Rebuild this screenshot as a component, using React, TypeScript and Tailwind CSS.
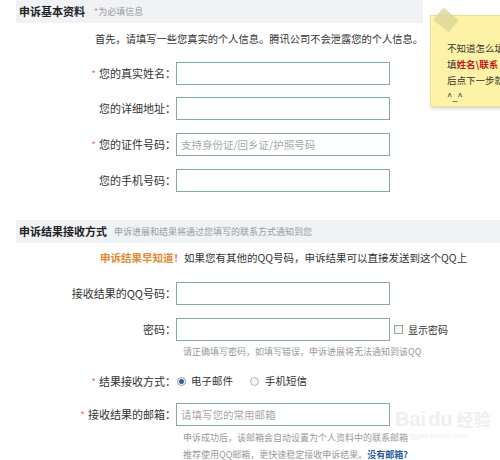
import React from "react";

function Label({ text, req }: { text: string; req?: boolean }) {
  return (
    <div className="w-[176px] shrink-0 text-right text-[11px] leading-[23px] text-[#333]">
      {req && <span className="text-[#e07a7a] text-[10px] mr-[3px]">*</span>}
      {text}
    </div>
  );
}

function Box({ placeholder }: { placeholder?: string }) {
  return (
    <div className="w-[214px] h-[23px] border border-[#86a8a8] bg-white shrink-0 flex items-center pl-[4px] text-[10.5px] text-[#a8a8a8]">
      {placeholder}
    </div>
  );
}

export default function App() {
  return (
    <div className="relative w-[500px] h-[460px] overflow-hidden bg-white font-['Noto_Sans_CJK_SC','Noto_Sans',sans-serif] text-[#333]">
      {/* Section 1 header */}
      <div className="ml-[16px] w-[407px] h-[23px] bg-[#f0f3f6] flex items-center pl-[3px]">
        <span className="text-[11px] font-bold text-[#222]">申诉基本资料</span>
        <span className="ml-[9px] text-[9px] text-[#999]">
          <span className="text-[#e07a7a]">*</span>为必填信息
        </span>
      </div>

      <div className="mt-[8px] h-[16px] leading-[16px] pl-[95px] text-[10.25px] text-[#333] whitespace-nowrap">
        首先，请填写一些您真实的个人信息。腾讯公司不会泄露您的个人信息。
      </div>

      <div className="mt-[15px] flex">
        <Label text="您的真实姓名：" req />
        <Box />
      </div>
      <div className="mt-[12px] flex">
        <Label text="您的详细地址：" />
        <Box />
      </div>
      <div className="mt-[13px] flex">
        <Label text="您的证件号码：" req />
        <Box placeholder="支持身份证/回乡证/护照号码" />
      </div>
      <div className="mt-[13px] flex">
        <Label text="您的手机号码：" />
        <Box />
      </div>

      {/* Section 2 header */}
      <div className="mt-[28px] ml-[16px] h-[23px] bg-[#f0f3f6] flex items-center pl-[3px]">
        <span className="text-[11px] font-bold text-[#222]">申诉结果接收方式</span>
        <span className="ml-[7px] text-[9px] text-[#999]">申诉进展和结果将通过您填写的联系方式通知到您</span>
      </div>

      <div className="mt-[7px] h-[16px] leading-[16px] pl-[100px] text-[10.5px] whitespace-nowrap">
        <span className="font-bold text-[#e08a35]">申诉结果早知道！</span>
        <span className="text-[#333]">如果您有其他的QQ号码，申诉结果可以直接发送到这个QQ上</span>
      </div>

      <div className="mt-[16px] flex">
        <Label text="接收结果的QQ号码：" />
        <Box />
      </div>
      <div className="mt-[13px] flex items-center">
        <Label text="密码：" />
        <Box />
        <div className="ml-[4px] w-[9px] h-[9px] border border-[#a0a0a0] bg-gradient-to-br from-[#e8e8e8] to-[#ffffff]" />
        <span className="ml-[5px] text-[10px] text-[#333]">显示密码</span>
      </div>
      <div className="mt-[4px] h-[14px] leading-[14px] pl-[183px] text-[9px] text-[#999] whitespace-nowrap">
        请正确填写密码，如填写错误，申诉进展将无法通知到该QQ
      </div>

      <div className="mt-[14px] h-[16px] flex items-center">
        <div className="w-[176px] shrink-0 text-right text-[11px] text-[#333]">
          <span className="text-[#e07a7a] text-[10px] mr-[3px]">*</span>结果接收方式：
        </div>
        <div className="ml-[1px] w-[9px] h-[9px] rounded-full border border-[#8a9aa8] bg-white flex items-center justify-center">
          <div className="w-[5px] h-[5px] rounded-full bg-[#2f5f8f]" />
        </div>
        <span className="ml-[5px] text-[10.5px] text-[#333]">电子邮件</span>
        <div className="ml-[17px] w-[9px] h-[9px] rounded-full border border-[#b0b8c0] bg-[#f4f4f4]" />
        <span className="ml-[6px] text-[10.5px] text-[#333]">手机短信</span>
      </div>

      <div className="mt-[14px] flex">
        <Label text="接收结果的邮箱：" req />
        <Box placeholder="请填写您的常用邮箱" />
      </div>
      <div className="mt-[5px] h-[14px] leading-[14px] pl-[183px] text-[9px] text-[#999] whitespace-nowrap">
        申诉成功后，该邮箱会自动设置为个人资料中的联系邮箱
      </div>
      <div className="mt-[3px] h-[14px] leading-[14px] pl-[183px] text-[9px] text-[#999] whitespace-nowrap">
        推荐使用QQ邮箱，更快速稳定接收申诉结果。<span className="font-bold text-[#2a5a9a]">没有邮箱?</span>
      </div>

      {/* Sticky note */}
      <div className="absolute left-[430px] top-[15px] w-[80px] h-[92px] bg-[#fdf3a6] border border-[#eadf92] shadow-[1px_2px_3px_rgba(0,0,0,0.15)] pl-[16px] pt-[24px] text-[9.5px] leading-[16px] text-[#333] whitespace-nowrap">
        <div>不知道怎么填</div>
        <div>
          填<span className="font-bold text-[#c0161a]">姓名\联系</span>
        </div>
        <div>后点下一步就</div>
        <div>^_^</div>
      </div>
      <div className="absolute left-[436px] top-[12px] w-[20px] h-[16px] rotate-[40deg] bg-[#d9d49a] opacity-80" />

      {/* Watermark */}
      <div className="absolute left-[395px] top-[408px] flex flex-col items-start opacity-40 pointer-events-none">
        <div className="flex items-center text-[20px] font-bold text-[#d8d8d8] leading-[22px] font-['Liberation_Sans',sans-serif]">
          <span>Bai</span>
          <span className="ml-[2px]">du</span>
          <span className="ml-[4px] text-[17px] font-['Noto_Sans_CJK_SC',sans-serif]">经验</span>
        </div>
        <div className="text-[8px] text-[#d8d8d8] font-['Liberation_Sans',sans-serif] ml-[8px]">jingyan.baidu.com</div>
      </div>
    </div>
  );
}
